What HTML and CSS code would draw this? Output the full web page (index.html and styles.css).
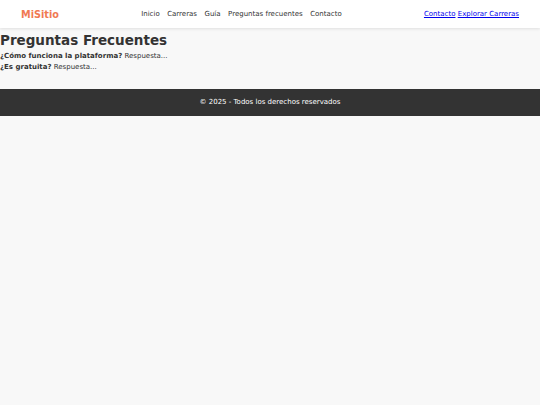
FILE: index.html
```html
<!DOCTYPE html>
<html lang="es">
<head>
<meta charset="utf-8">
<title>MiSitio</title>
<link rel="stylesheet" href="styles.css">
</head>
<body>
<header class="site-header">
  <div class="logo">MiSitio</div>
  <nav class="main-nav">
    <a href="#">Inicio</a>
    <a href="#">Carreras</a>
    <a href="#">Guía</a>
    <a href="#">Preguntas frecuentes</a>
    <a href="#">Contacto</a>
  </nav>
  <div class="header-links">
    <a href="#">Contacto</a> <a href="#">Explorar Carreras</a>
  </div>
</header>
<main class="content">
  <h1>Preguntas Frecuentes</h1>
  <p><strong>¿Cómo funciona la plataforma?</strong> Respuesta...</p>
  <p><strong>¿Es gratuita?</strong> Respuesta...</p>
</main>
<footer class="site-footer">© 2025 - Todos los derechos reservados</footer>
</body>
</html>
```
FILE: styles.css
```css
html, body {
  margin: 0;
  padding: 0;
}
body {
  background: #f8f8f8;
  font-family: "DejaVu Sans", Verdana, sans-serif;
  color: #333;
  font-size: 7px;
}
.site-header {
  display: flex;
  justify-content: space-between;
  align-items: center;
  height: 28px;
  padding: 0 21px;
  background: #fff;
  box-shadow: 0 1px 3px rgba(0,0,0,0.1);
}
.logo {
  color: #f07a53;
  font-weight: bold;
  font-size: 9.7px;
}
.main-nav {
  display: flex;
  gap: 7.5px;
}
.main-nav a {
  color: #333;
  text-decoration: none;
}
.header-links a {
  color: #0000ee;
}
.content {
  padding: 4px 0 12px;
}
.content h1 {
  margin: 0 0 2px;
  font-size: 13.5px;
  color: #333;
  line-height: 17px;
}
.content p {
  margin: 0;
  line-height: 11px;
}
.site-footer {
  background: #333;
  color: #fff;
  text-align: center;
  height: 27px;
  line-height: 27px;
  margin-top: 4px;
}
```
